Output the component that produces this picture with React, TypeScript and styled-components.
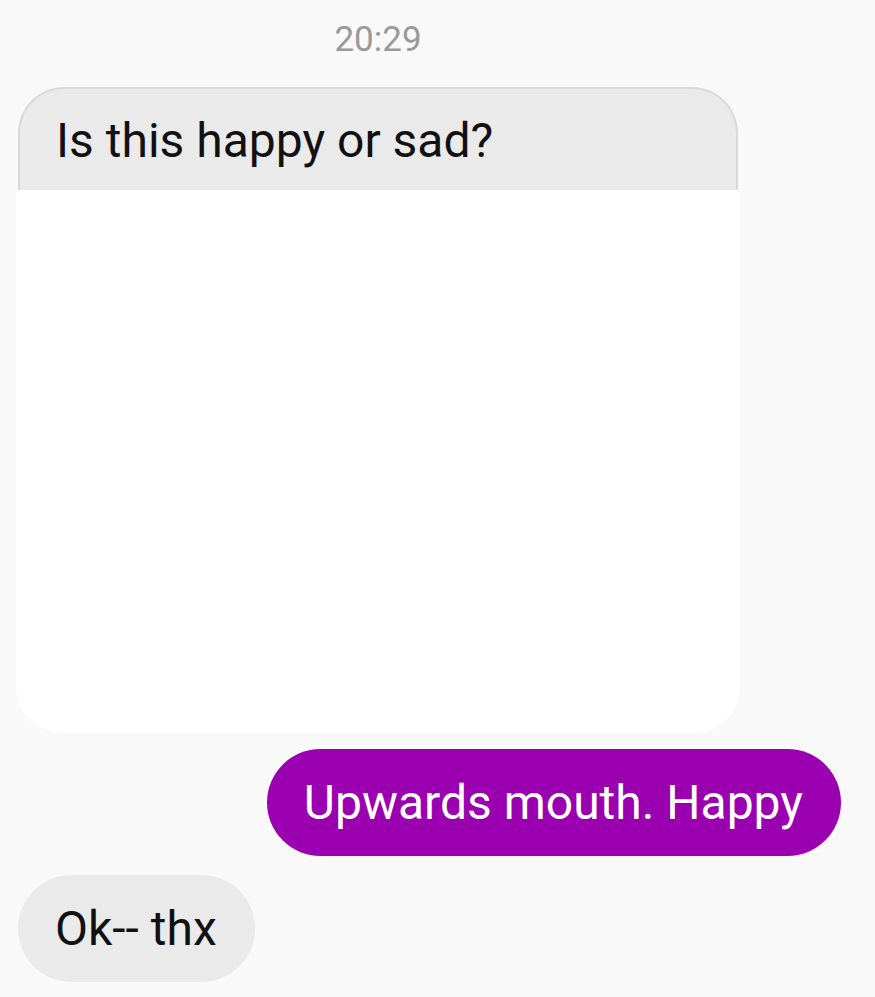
import React from "react";
import styled, { createGlobalStyle } from "styled-components";

const Global = createGlobalStyle`
  html, body { margin: 0; padding: 0; background: #f9f9f9; }
  body { font-family: Roboto, "Noto Sans", sans-serif; }
`;

const Thread = styled.div`
  width: 875px;
  height: 997px;
  box-sizing: border-box;
  padding: 0 34px 0 18px;
  display: flex;
  flex-direction: column;
  overflow: hidden;
`;

const Stamp = styled.div`
  width: 720px;
  text-align: center;
  color: #9a9a9a;
  font-size: 35px;
  line-height: 40px;
  padding-top: 20px;
  height: 87px;
  box-sizing: border-box;
`;

const MediaBubble = styled.div`
  width: 720px;
  display: flex;
  flex-direction: column;
`;

const Caption = styled.div`
  height: 103px;
  box-sizing: border-box;
  background: #eaeaea;
  border: 2px solid #d9d9d9;
  border-bottom: none;
  border-radius: 46px 46px 0 0;
  padding: 24px 0 0 36px;
  font-size: 48px;
  line-height: 56px;
  color: #111;
`;

const Picture = styled.div`
  margin: 0 -2px;
  height: 543px;
  background: #ffffff;
  border-radius: 0 0 46px 46px;
`;

const Row = styled.div<{ $mine?: boolean }>`
  display: flex;
  justify-content: ${(p) => (p.$mine ? "flex-end" : "flex-start")};
  margin-top: ${(p) => (p.$mine ? "16px" : "19px")};
`;

const Bubble = styled.div<{ $mine?: boolean }>`
  height: 107px;
  box-sizing: border-box;
  padding: 0 38px 0 37px;
  display: flex;
  align-items: center;
  border-radius: 54px;
  font-size: 48px;
  line-height: 56px;
  background: ${(p) => (p.$mine ? "#9b00b0" : "#eaeaea")};
  color: ${(p) => (p.$mine ? "#ffffff" : "#111")};
`;

export default function App() {
  return (
    <>
      <Global />
      <Thread>
        <Stamp>20:29</Stamp>
        <MediaBubble>
          <Caption>Is this happy or sad?</Caption>
          <Picture />
        </MediaBubble>
        <Row $mine>
          <Bubble $mine>Upwards mouth. Happy</Bubble>
        </Row>
        <Row>
          <Bubble>Ok-- thx</Bubble>
        </Row>
      </Thread>
    </>
  );
}
